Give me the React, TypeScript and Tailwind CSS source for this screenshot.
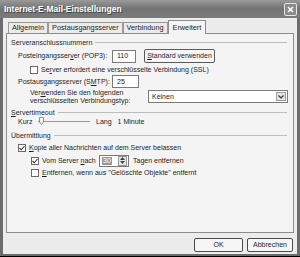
import React from "react";

const font = { fontFamily: '"Liberation Sans", Arial, sans-serif' };

function Check({ checked = false }: { checked?: boolean }) {
  return (
    <span className="w-[8px] h-[8px] border border-[#6a6a6a] bg-white flex items-center justify-center shrink-0">
      {checked && (
        <svg width="6" height="6" viewBox="0 0 6 6">
          <path d="M0.5 3 L2.3 4.8 L5.5 1" fill="none" stroke="#333" strokeWidth="1.1" />
        </svg>
      )}
    </span>
  );
}

function GroupHeader({ label }: { label: React.ReactNode }) {
  return (
    <div className="h-[9px] shrink-0 flex items-center pl-[4px] pr-[6px] gap-[3px]">
      <span className="leading-none">{label}</span>
      <span className="flex-1 h-[2px] border-t border-[#bdbdbd] border-b-white" />
    </div>
  );
}

function Tab({ label, active = false }: { label: string; active?: boolean }) {
  return active ? (
    <div className="h-[14px] -mb-[1px] px-[4px] flex items-center bg-[#f4f4f4] border border-b-0 border-[#8d8d8d] relative z-10">
      {label}
    </div>
  ) : (
    <div className="h-[11px] mt-[2px] px-[3px] flex items-center bg-[#ebebeb] border border-b-0 border-[#9a9a9a]">
      {label}
    </div>
  );
}

export default function App() {
  return (
    <div
      className="w-[300px] h-[257px] flex flex-col bg-[#6c6c6c] border-b border-black text-[7px] leading-[10px] text-[#1e1e1e] whitespace-nowrap"
      style={font}
    >
      <div className="h-[18px] shrink-0 flex items-center justify-between pl-[4px] pr-[3px] bg-gradient-to-b from-[#9a9a9a] via-[#727272] to-[#7c7c7c]">
        <span className="text-[8.5px] font-bold text-white [text-shadow:1px_1px_0_#444]">
          Internet-E-Mail-Einstellungen
        </span>
        <span className="w-[13px] h-[13px] rounded-[2px] border border-[#e6e6e6] bg-[#8a8a8a] flex items-center justify-center">
          <svg width="7" height="7" viewBox="0 0 7 7">
            <path d="M1 1 L6 6 M6 1 L1 6" stroke="white" strokeWidth="1.6" />
          </svg>
        </span>
      </div>

      <div className="h-[236px] shrink-0 mx-[3px] bg-[#ececec] flex flex-col px-[3px] pt-[2px]">
        <div className="flex pl-[2px] items-start shrink-0 text-[7.3px]">
          <Tab label="Allgemein" />
          <Tab label="Postausgangsserver" />
          <Tab label="Verbindung" />
          <Tab label="Erweitert" active />
        </div>

        <div className="h-[200px] shrink-0 border border-[#8d8d8d] bg-[#f4f4f4] flex flex-col pt-[4px]">
          <GroupHeader label="Serveranschlussnummern" />

          <div className="h-[14px] shrink-0 mt-[2px] flex items-center pl-[11px]">
            <span className="w-[94px] shrink-0">
              Posteingangsser<u>v</u>er (POP3):
            </span>
            <span className="w-[24px] h-[13px] border border-[#7a7a7a] bg-white flex items-center pl-[4px]">110</span>
            <span className="ml-[8px] w-[71px] h-[14px] border border-[#5a5a5a] rounded-[2px] bg-[#f6f6f6] flex items-center justify-center">
              <span>
                <u>S</u>tandard verwenden
              </span>
            </span>
          </div>

          <div className="h-[10px] shrink-0 mt-[2px] flex items-center pl-[23px] gap-[3px]">
            <Check />
            <span>
              Se<u>r</u>ver erfordert eine verschlüsselte Verbindung (SSL)
            </span>
          </div>

          <div className="h-[13px] shrink-0 flex items-center pl-[11px]">
            <span className="w-[94px] shrink-0">
              Postausgangsserver (S<u>M</u>TP):
            </span>
            <span className="w-[27px] h-[13px] border border-[#7a7a7a] bg-white flex items-center pl-[4px]">25</span>
          </div>

          <div className="h-[15px] shrink-0 mt-[1px] flex items-center pl-[23px]">
            <span className="w-[118px] shrink-0 leading-[8px]">
              Ver<u>w</u>enden Sie den folgenden
              <br />
              verschlüsselten Verbindungstyp:
            </span>
            <span className="w-[140px] h-[13px] border border-[#7a7a7a] bg-white flex items-center justify-between pl-[3px] pr-[1px]">
              <span>Keinen</span>
              <span className="w-[10px] h-[9px] border border-[#9a9a9a] bg-[#e4e4e4] flex items-center justify-center">
                <svg width="6" height="4" viewBox="0 0 6 4">
                  <path d="M0.5 0.5 L3 3 L5.5 0.5" fill="none" stroke="#333" strokeWidth="1.2" />
                </svg>
              </span>
            </span>
          </div>

          <div className="mt-[4px] shrink-0">
            <GroupHeader label={<><u>S</u>ervertimeout</>} />
          </div>

          <div className="h-[9px] shrink-0 flex items-center pl-[11px]">
            <span className="w-[20px]">Kurz</span>
            <span className="relative w-[52px] h-[9px] flex items-center">
              <span className="w-full h-[2px] border-t border-[#9a9a9a] border-b-white" />
              <svg className="absolute left-[1px] top-[0px]" width="5" height="8" viewBox="0 0 5 8">
                <path d="M0.5 0.5 H4.5 V5 L2.5 7.5 L0.5 5 Z" fill="#f4f4f4" stroke="#777" strokeWidth="0.8" />
              </svg>
            </span>
            <span className="ml-[6px]">Lang</span>
            <span className="ml-[6px]">1 Minute</span>
          </div>

          <div className="mt-[5px] shrink-0">
            <GroupHeader label="Übermittlung" />
          </div>

          <div className="h-[10px] shrink-0 mt-[3px] flex items-center pl-[11px] gap-[3px]">
            <Check checked />
            <span>
              <u>K</u>opie aller Nachrichten auf dem Server belassen
            </span>
          </div>

          <div className="h-[13px] shrink-0 mt-[1px] flex items-center pl-[24px]">
            <Check checked />
            <span className="ml-[3px] w-[57px] shrink-0">
              Vom Server <u>n</u>ach
            </span>
            <span className="w-[30px] h-[12px] border border-[#7a7a7a] bg-white flex items-center justify-between pl-[2px] pr-[1px]">
              <span className="bg-[#9a9a9a] text-white px-[1px] leading-[8px]">30</span>
              <span className="w-[9px] h-[10px] border border-[#9a9a9a] bg-[#e4e4e4] flex flex-col items-center justify-center gap-[1px]">
                <svg width="5" height="3" viewBox="0 0 5 3">
                  <path d="M0 3 L2.5 0 L5 3 Z" fill="#444" />
                </svg>
                <svg width="5" height="3" viewBox="0 0 5 3">
                  <path d="M0 0 L2.5 3 L5 0 Z" fill="#444" />
                </svg>
              </span>
            </span>
            <span className="ml-[4px]">Tagen entfernen</span>
          </div>

          <div className="h-[10px] shrink-0 mt-[1px] flex items-center pl-[24px] gap-[3px]">
            <Check />
            <span>
              <u>E</u>ntfernen, wenn aus "Gelöschte Objekte" entfernt
            </span>
          </div>
        </div>

        <div className="flex justify-end gap-[4px] mt-[5px] pr-[1px] shrink-0">
          <span className="w-[49px] h-[14px] border border-[#4a4a4a] rounded-[2px] bg-[#f6f6f6] flex items-center justify-center">
            OK
          </span>
          <span className="w-[46px] h-[14px] border border-[#4a4a4a] rounded-[2px] bg-[#f6f6f6] flex items-center justify-center">
            Abbrechen
          </span>
        </div>
      </div>
    </div>
  );
}
